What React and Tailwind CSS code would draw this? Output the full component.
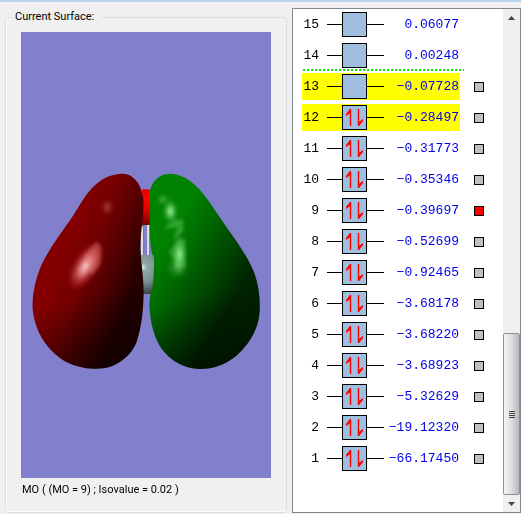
import { useState } from "react";

const orbitals = [
  { n: 15, energy: "0.06077" },
  { n: 14, energy: "0.00248" },
  { n: 13, energy: "−0.07728", toggle: true, frontier: true },
  { n: 12, energy: "−0.28497", toggle: true, frontier: true, filled: true },
  { n: 11, energy: "−0.31773", toggle: true, filled: true },
  { n: 10, energy: "−0.35346", toggle: true, filled: true },
  { n: 9, energy: "−0.39697", toggle: true, filled: true },
  { n: 8, energy: "−0.52699", toggle: true, filled: true },
  { n: 7, energy: "−0.92465", toggle: true, filled: true },
  { n: 6, energy: "−3.68178", toggle: true, filled: true },
  { n: 5, energy: "−3.68220", toggle: true, filled: true },
  { n: 4, energy: "−3.68923", toggle: true, filled: true },
  { n: 3, energy: "−5.32629", toggle: true, filled: true },
  { n: 2, energy: "−19.12320", toggle: true, filled: true },
  { n: 1, energy: "−66.17450", toggle: true, filled: true },
];

const greenLobe =
  "M120 41C150 41 178 57 204 83C240 123 263 164 300 216C328 256 357 297 374 341C387 378 392 421 388 465C382 513 355 555 318 588C286 614 250 627 210 627C163 626 124 605 96 568C72 534 60 484 58 437C58 420 61 403 65 385L67 285C61 260 57 200 57 180L58 108C61 65 85 42 120 41Z";
const redLobe =
  "M308 41C342 42 366 74 370 120C373 164 361 210 361 258C362 305 371 347 371 399C370 449 365 501 349 548C332 586 301 610 268 621C224 632 166 625 123 596C76 563 45 513 38 448C36 410 44 363 64 316C84 271 119 225 150 181C174 146 189 113 216 84C243 55 275 41 308 41Z";

function SurfaceView() {
  return (
    <svg viewBox="0 0 750 1338" className="block w-full" role="img" aria-label="Molecular orbital surface">
      <defs>
        <linearGradient id="redBody" gradientUnits="userSpaceOnUse" x1="130" y1="260" x2="355" y2="350">
          <stop offset="0" stopColor="#840000" />
          <stop offset="0.35" stopColor="#720000" />
          <stop offset="0.7" stopColor="#4c0000" />
          <stop offset="1" stopColor="#240000" />
        </linearGradient>
        <linearGradient id="greenBody" gradientUnits="userSpaceOnUse" x1="110" y1="230" x2="345" y2="370">
          <stop offset="0" stopColor="#008200" />
          <stop offset="0.3" stopColor="#006a00" />
          <stop offset="0.65" stopColor="#004800" />
          <stop offset="1" stopColor="#002400" />
        </linearGradient>
        <linearGradient id="lowerShade" gradientUnits="userSpaceOnUse" x1="160" y1="420" x2="220" y2="640">
          <stop offset="0" stopColor="#000" stopOpacity="0" />
          <stop offset="1" stopColor="#000" stopOpacity="0.5" />
        </linearGradient>
        <linearGradient id="oxygen" x1="0" y1="0" x2="0" y2="1">
          <stop offset="0" stopColor="#e00000" />
          <stop offset="0.25" stopColor="#ff0000" />
          <stop offset="0.6" stopColor="#e00000" />
          <stop offset="1" stopColor="#700000" />
        </linearGradient>
        <radialGradient id="carbon" gradientUnits="userSpaceOnUse" cx="38" cy="322" r="82">
          <stop offset="0" stopColor="#e8f4f4" />
          <stop offset="0.14" stopColor="#91a9a9" />
          <stop offset="0.55" stopColor="#789090" />
          <stop offset="1" stopColor="#344040" />
        </radialGradient>
        <radialGradient id="redGlow">
          <stop offset="0" stopColor="#ffd2d2" />
          <stop offset="0.3" stopColor="#f09090" stopOpacity="0.85" />
          <stop offset="0.65" stopColor="#d04040" stopOpacity="0.4" />
          <stop offset="1" stopColor="#900000" stopOpacity="0" />
        </radialGradient>
        <radialGradient id="greenGlow">
          <stop offset="0" stopColor="#a8f8a8" />
          <stop offset="0.4" stopColor="#62cc62" stopOpacity="0.75" />
          <stop offset="1" stopColor="#008000" stopOpacity="0" />
        </radialGradient>
        <filter id="soften" x="-20%" y="-20%" width="140%" height="140%">
          <feGaussianBlur stdDeviation="5" />
        </filter>
      </defs>

      <g transform="translate(327 384)">
        <path d={greenLobe} fill="url(#greenBody)" />
        <path d={greenLobe} fill="url(#lowerShade)" />
        <g filter="url(#soften)">
          <ellipse cx="121" cy="154" rx="26" ry="42" fill="url(#greenGlow)" />
          <ellipse cx="98" cy="118" rx="24" ry="20" fill="url(#greenGlow)" opacity="0.4" />
          <path d="M102 205L130 180L160 178V215L128 242L142 203Z" fill="#40b040" opacity="0.7" />
          <path d="M116 275L148 232L167 240V322L140 320Z" fill="#48b848" opacity="0.6" />
          <ellipse cx="148" cy="285" rx="26" ry="68" fill="url(#greenGlow)" />
          <ellipse cx="142" cy="322" rx="40" ry="42" fill="url(#greenGlow)" opacity="0.35" />
        </g>
        <rect x="36" y="88" width="23" height="107" fill="url(#oxygen)" />
        <path d="M30 195H60V285H30Z" fill="#8280cc" />
        <path d="M37 195V285M55 195V285" stroke="#78787e" strokeWidth="9" />
        <path d="M36 200V285M54 195V285" stroke="#f4f4f4" strokeWidth="5" />
        <path d="M30 285H70Q74 300 71 340Q69 385 63 402H30Z" fill="url(#carbon)" />
      </g>

      <g transform="translate(-3 384)">
        <path d={redLobe} fill="url(#redBody)" />
        <path d={redLobe} fill="url(#lowerShade)" />
        <g filter="url(#soften)">
          <ellipse cx="197" cy="318" rx="44" ry="92" transform="rotate(32 197 318)" fill="url(#redGlow)" />
          <path d="M192 285L230 245L243 262L241 315L215 345Z" fill="#e07878" opacity="0.45" />
          <ellipse cx="262" cy="142" rx="24" ry="32" fill="url(#redGlow)" opacity="0.3" />
        </g>
      </g>
    </svg>
  );
}

function ElectronPair() {
  return (
    <svg viewBox="0 0 23 23" className="h-[23px] w-[23px]" aria-hidden="true">
      <path d="M7.500 20V3M15.500 3V20" fill="none" stroke="#f00" strokeWidth="1.400" />
      <path d="M8 3H7L3 8V10L8 6.500ZM15 20H16L20 15V13L15 16.500Z" fill="#f00" />
    </svg>
  );
}

function OrbitalRow({ orbital, selected, onToggle }) {
  return (
    <li className="flex h-[31px] items-center">
      <div className={`flex h-[27px] w-[158px] shrink-0 items-center ${orbital.frontier ? "bg-[#ffff00]" : ""}`}>
        <span className="w-[17px] text-right text-black">{orbital.n}</span>
        <span className="ml-2 h-px w-[15px] bg-black" />
        <span className="flex h-[25px] w-[25px] items-center justify-center border border-black bg-[#a0bedf]">
          {orbital.filled && <ElectronPair />}
        </span>
        <span className="h-px w-[17px] bg-black" />
        <span className="-ml-2 flex-1 pr-px text-right text-[#0000e8]">{orbital.energy}</span>
      </div>
      {orbital.toggle && (
        <input
          type="checkbox"
          aria-label={`Show orbital ${orbital.n}`}
          checked={selected}
          onChange={onToggle}
          className="ml-[14px] h-[10px] w-[10px] shrink-0 appearance-none border border-black bg-[#c0c0c0] checked:bg-[#ff0000]"
        />
      )}
    </li>
  );
}

function ScrollBar() {
  return (
    <div className="flex w-[17px] shrink-0 flex-col bg-[#efefef]">
      <button type="button" aria-label="Scroll up" className="flex h-[17px] items-center justify-center">
        <svg viewBox="0 0 7 4" className="h-1 w-[7px]"><path d="M0 4L3.500 0L7 4Z" fill="#444" /></svg>
      </button>
      <div className="flex flex-1 flex-col">
        <div className="flex-[308]" />
        <div className="flex flex-[160] flex-col items-center justify-center gap-px rounded-xs border border-[#8e8e93] bg-linear-to-r from-[#f5f5f5] via-[#dedee0] to-[#b9b9bd]">
          <span className="h-px w-1.5 bg-[#444]" />
          <span className="h-px w-1.5 bg-[#444]" />
          <span className="h-px w-1.5 bg-[#444]" />
          <span className="h-px w-1.5 bg-[#444]" />
        </div>
      </div>
      <button type="button" aria-label="Scroll down" className="flex h-[17px] items-center justify-center">
        <svg viewBox="0 0 7 4" className="h-1 w-[7px]"><path d="M0 0L3.500 4L7 0Z" fill="#444" /></svg>
      </button>
    </div>
  );
}

export default function App() {
  const [selected, setSelected] = useState([9]);
  const toggle = (n) =>
    setSelected((list) => (list.includes(n) ? list.filter((item) => item !== n) : [...list, n]));

  return (
    <main className="flex min-h-screen flex-col border-t-2 border-[#b9d1ea] bg-[#f0f0f0] font-[Roboto,Arial,sans-serif] text-[11px] text-black">
      <div className="flex flex-1 gap-[5px] pt-1.5 pb-px pl-[5px]">
        <fieldset className="min-w-0 flex-1 rounded-sm border border-[#d5dfe8] px-[15px] pb-2 shadow-[inset_1px_0_0_#fff,inset_0_-1px_0_#fff]">
          <legend className="-ml-2 px-0.5 pr-2 leading-[18px]">Current Surface:</legend>
          <div className="mt-1.5 bg-[#8280cc]">
            <SurfaceView />
          </div>
          <p className="mt-1 pl-px leading-4 whitespace-nowrap">MO ( (MO = 9) ; Isovalue = 0.02 )</p>
        </fieldset>
        <section className="flex w-[229px] shrink-0 border border-[#828790] bg-white">
          <div className="flex-1 pl-[9px] font-['Liberation_Mono',monospace] text-[13px] leading-4">
            <ul>
              {orbitals.slice(0, 2).map((o) => (
                <OrbitalRow key={o.n} orbital={o} />
              ))}
            </ul>
            <div className="-mt-0.5 -mb-px h-[3px] px-px">
              <svg className="block h-0.5 w-[161px]" aria-hidden="true">
                <path d="M0 1H161" stroke="#00f000" strokeWidth="2" strokeDasharray="2 2" shapeRendering="crispEdges" />
              </svg>
            </div>
            <ul>
              {orbitals.slice(2).map((o) => (
                <OrbitalRow key={o.n} orbital={o} selected={selected.includes(o.n)} onToggle={() => toggle(o.n)} />
              ))}
            </ul>
          </div>
          <ScrollBar />
        </section>
      </div>
    </main>
  );
}
